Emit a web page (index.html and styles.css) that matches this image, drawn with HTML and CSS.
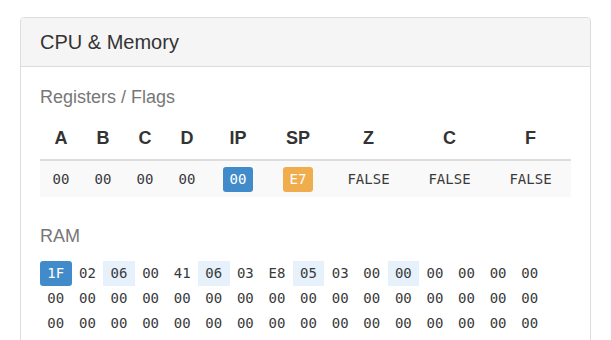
FILE: index.html
```html
<!DOCTYPE html>
<html lang="en">
<head>
  <meta charset="UTF-8">
  <title>CPU &amp; Memory</title>
  <link rel="stylesheet" href="styles.css">
</head>
<body>

  <div class="panel">
    <div class="panel-heading">CPU &amp; Memory</div>
    <div class="panel-body">
      <h4>Registers / Flags</h4>
      <table class="regs">
        <thead>
          <tr>
            <th class="c-reg">A</th>
            <th class="c-reg">B</th>
            <th class="c-reg">C</th>
            <th class="c-reg">D</th>
            <th class="c-ptr">IP</th>
            <th class="c-ptr">SP</th>
            <th class="c-flag">Z</th>
            <th class="c-flag">C</th>
            <th class="c-flag">F</th>
          </tr>
        </thead>
        <tbody>
          <tr>
            <td>00</td>
            <td>00</td>
            <td>00</td>
            <td>00</td>
            <td><span class="badge ip">00</span></td>
            <td><span class="badge sp">E7</span></td>
            <td>FALSE</td>
            <td>FALSE</td>
            <td>FALSE</td>
          </tr>
        </tbody>
      </table>

      <h4 class="ram-title">RAM</h4>
      <div class="ram" id="ram"></div>
    </div>
  </div>

  <script>
    const mem = ["1F","02","06","00","41","06","03","E8","05","03","00","00","00","00","00","00"];
    for (let i = 0; i < 32; i++) mem.push("00");
    const marked = [2, 5, 8, 11];
    const ram = document.getElementById("ram");

    mem.forEach((val, i) => {
      const cell = document.createElement("span");
      cell.className = "cell";
      if (i === 0) cell.className += " cell-ip";
      else if (marked.includes(i)) cell.className += " cell-mark";
      cell.textContent = val;
      ram.appendChild(cell);
    });
  </script>
</body>
</html>
```

FILE: styles.css
```css
body {
  margin: 0;
  padding: 17px 20px;
  font-family: "Liberation Sans", Arial, sans-serif;
  color: #333;
  background: #fff;
}
.panel {
  border: 1px solid #ddd;
  border-radius: 4px;
  background: #fff;
}
.panel-heading {
  background: #f5f5f5;
  border-bottom: 1px solid #ddd;
  border-radius: 3px 3px 0 0;
  padding: 13px 19px;
  font-size: 20px;
  line-height: 22px;
  color: #333;
}
.panel-body {
  padding: 20px 19px;
}
h4 {
  margin: 0 0 11px;
  font-size: 18px;
  font-weight: normal;
  line-height: 20px;
  color: #777;
}
.regs {
  width: 531px;
  table-layout: fixed;
  border-collapse: collapse;
  margin-bottom: 29px;
}
.c-reg { width: 42px; }
.c-ptr { width: 60px; }
.c-flag { width: 81px; }
.regs th {
  font-size: 18px;
  font-weight: bold;
  line-height: 26px;
  padding: 7px 0 8px;
  text-align: center;
  border-bottom: 2px solid #ddd;
}
.regs td {
  background: #f9f9f9;
  font-family: "DejaVu Sans Mono", "Liberation Mono", monospace;
  font-size: 14px;
  line-height: 25px;
  padding: 6px 0 5px;
  text-align: center;
  color: #3a3a3a;
}
.badge {
  display: inline-block;
  padding: 3px 7px;
  line-height: 19px;
  border-radius: 3px;
  color: #fff;
}
.ip { background: #428bca; }
.sp { background: #f0ad4e; }
.ram-title {
  margin-bottom: 15px;
}
.ram {
  display: grid;
  grid-template-columns: repeat(16, 31.6px);
  font-family: "DejaVu Sans Mono", "Liberation Mono", monospace;
  font-size: 14px;
}
.cell {
  height: 25px;
  line-height: 25px;
  text-align: center;
  color: #3a3a3a;
}
.cell-ip {
  background: #428bca;
  color: #fff;
  border-radius: 3px;
}
.cell-mark {
  background: #e6f1fc;
}
```
